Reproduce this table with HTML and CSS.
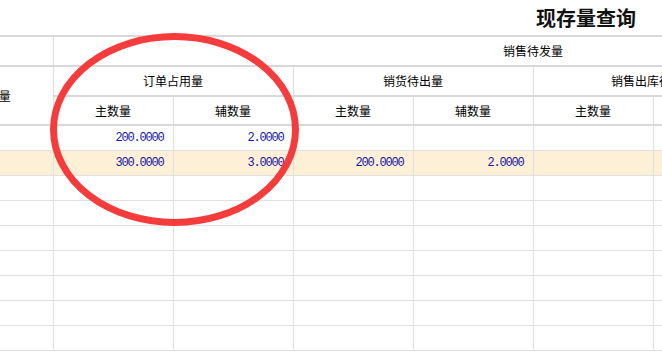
FILE: index.html
```html
<!DOCTYPE html>
<html lang="zh-CN">
<head>
<meta charset="utf-8">
<title>现存量查询</title>
<link rel="stylesheet" href="styles.css">
</head>
<body>
<div class="page">
  <header class="titlebar"><h1 class="title">现存量查询</h1></header>
  <div class="grid-wrap">
    <table class="grid">
      <colgroup>
        <col class="c"><col class="c"><col class="c"><col class="c"><col class="c"><col class="c"><col class="c"><col class="c"><col class="c">
      </colgroup>
      <thead>
        <tr class="hr">
          <th></th>
          <th colspan="8">销售待发量</th>
        </tr>
        <tr class="hr">
          <th rowspan="2">现存量</th>
          <th colspan="2">订单占用量</th>
          <th colspan="2">销货待出量</th>
          <th colspan="2">销售出库待出量</th>
          <th colspan="2">发货待出量</th>
        </tr>
        <tr class="hr hr-last">
          <th>主数量</th><th>辅数量</th>
          <th>主数量</th><th>辅数量</th>
          <th>主数量</th><th>辅数量</th>
          <th>主数量</th><th>辅数量</th>
        </tr>
      </thead>
      <tbody>
        <tr><td></td><td>200.0000</td><td>2.0000</td><td></td><td></td><td></td><td></td><td></td><td></td></tr>
        <tr class="sel"><td></td><td>300.0000</td><td>3.0000</td><td>200.0000</td><td>2.0000</td><td></td><td></td><td></td><td></td></tr>
        <tr><td></td><td></td><td></td><td></td><td></td><td></td><td></td><td></td><td></td></tr>
        <tr><td></td><td></td><td></td><td></td><td></td><td></td><td></td><td></td><td></td></tr>
        <tr><td></td><td></td><td></td><td></td><td></td><td></td><td></td><td></td><td></td></tr>
        <tr><td></td><td></td><td></td><td></td><td></td><td></td><td></td><td></td><td></td></tr>
        <tr><td></td><td></td><td></td><td></td><td></td><td></td><td></td><td></td><td></td></tr>
        <tr><td></td><td></td><td></td><td></td><td></td><td></td><td></td><td></td><td></td></tr>
        <tr><td></td><td></td><td></td><td></td><td></td><td></td><td></td><td></td><td></td></tr>
      </tbody>
    </table>
  </div>
  <svg class="mark" width="662" height="357" viewBox="0 0 662 357" aria-hidden="true">
    <ellipse cx="174.5" cy="129.5" rx="121" ry="93" fill="none" stroke="#f43c3c" stroke-width="7"/>
  </svg>
</div>
</body>
</html>
```

FILE: styles.css
```css
html, body {
  margin: 0;
  padding: 0;
  background: #ffffff;
}
body {
  width: 662px;
  height: 357px;
  overflow: hidden;
  font-family: "Noto Sans CJK SC", "Liberation Sans", sans-serif;
  font-size: 12px;
  color: #000;
}
.page {
  position: relative;
  width: 662px;
  height: 357px;
  overflow: hidden;
}
.titlebar {
  height: 35px;
  display: flex;
  align-items: center;
  justify-content: flex-end;
  padding-right: 26px;
}
.title {
  margin: 0;
  font-size: 20px;
  font-weight: 700;
  line-height: 1;
  color: #111;
}
.grid-wrap {
  overflow: hidden;
  width: 662px;
}
.grid {
  margin-left: -67px;
  border-collapse: collapse;
  table-layout: fixed;
  width: 1080px;
  border-top: 2px solid #d8d8d8;
}
.grid .c { width: 120px; }
.grid th {
  font-weight: 400;
  height: 28px;
  padding: 0;
  text-align: center;
  vertical-align: middle;
  border: 1px solid #dcdcdc;
  border-bottom: 2px solid #d8d8d8;
  line-height: 14px;
}
.grid .hr-last th { height: 27px; }
.grid th:first-child { border-left: none; }
.grid td {
  height: 24px;
  padding: 0 9px 0 0;
  text-align: right;
  vertical-align: middle;
  border: 1px solid #e0e0e0;
  font-family: "Liberation Mono", "DejaVu Sans Mono", monospace;
  font-size: 12px;
  letter-spacing: -1.2px;
  color: #1515a6;
  line-height: 14px;
}
.grid td:first-child { border-left: none; }
.grid tr.sel td { background: #fdf0d6; }
.mark {
  position: absolute;
  left: 0;
  top: 0;
  pointer-events: none;
}
```
